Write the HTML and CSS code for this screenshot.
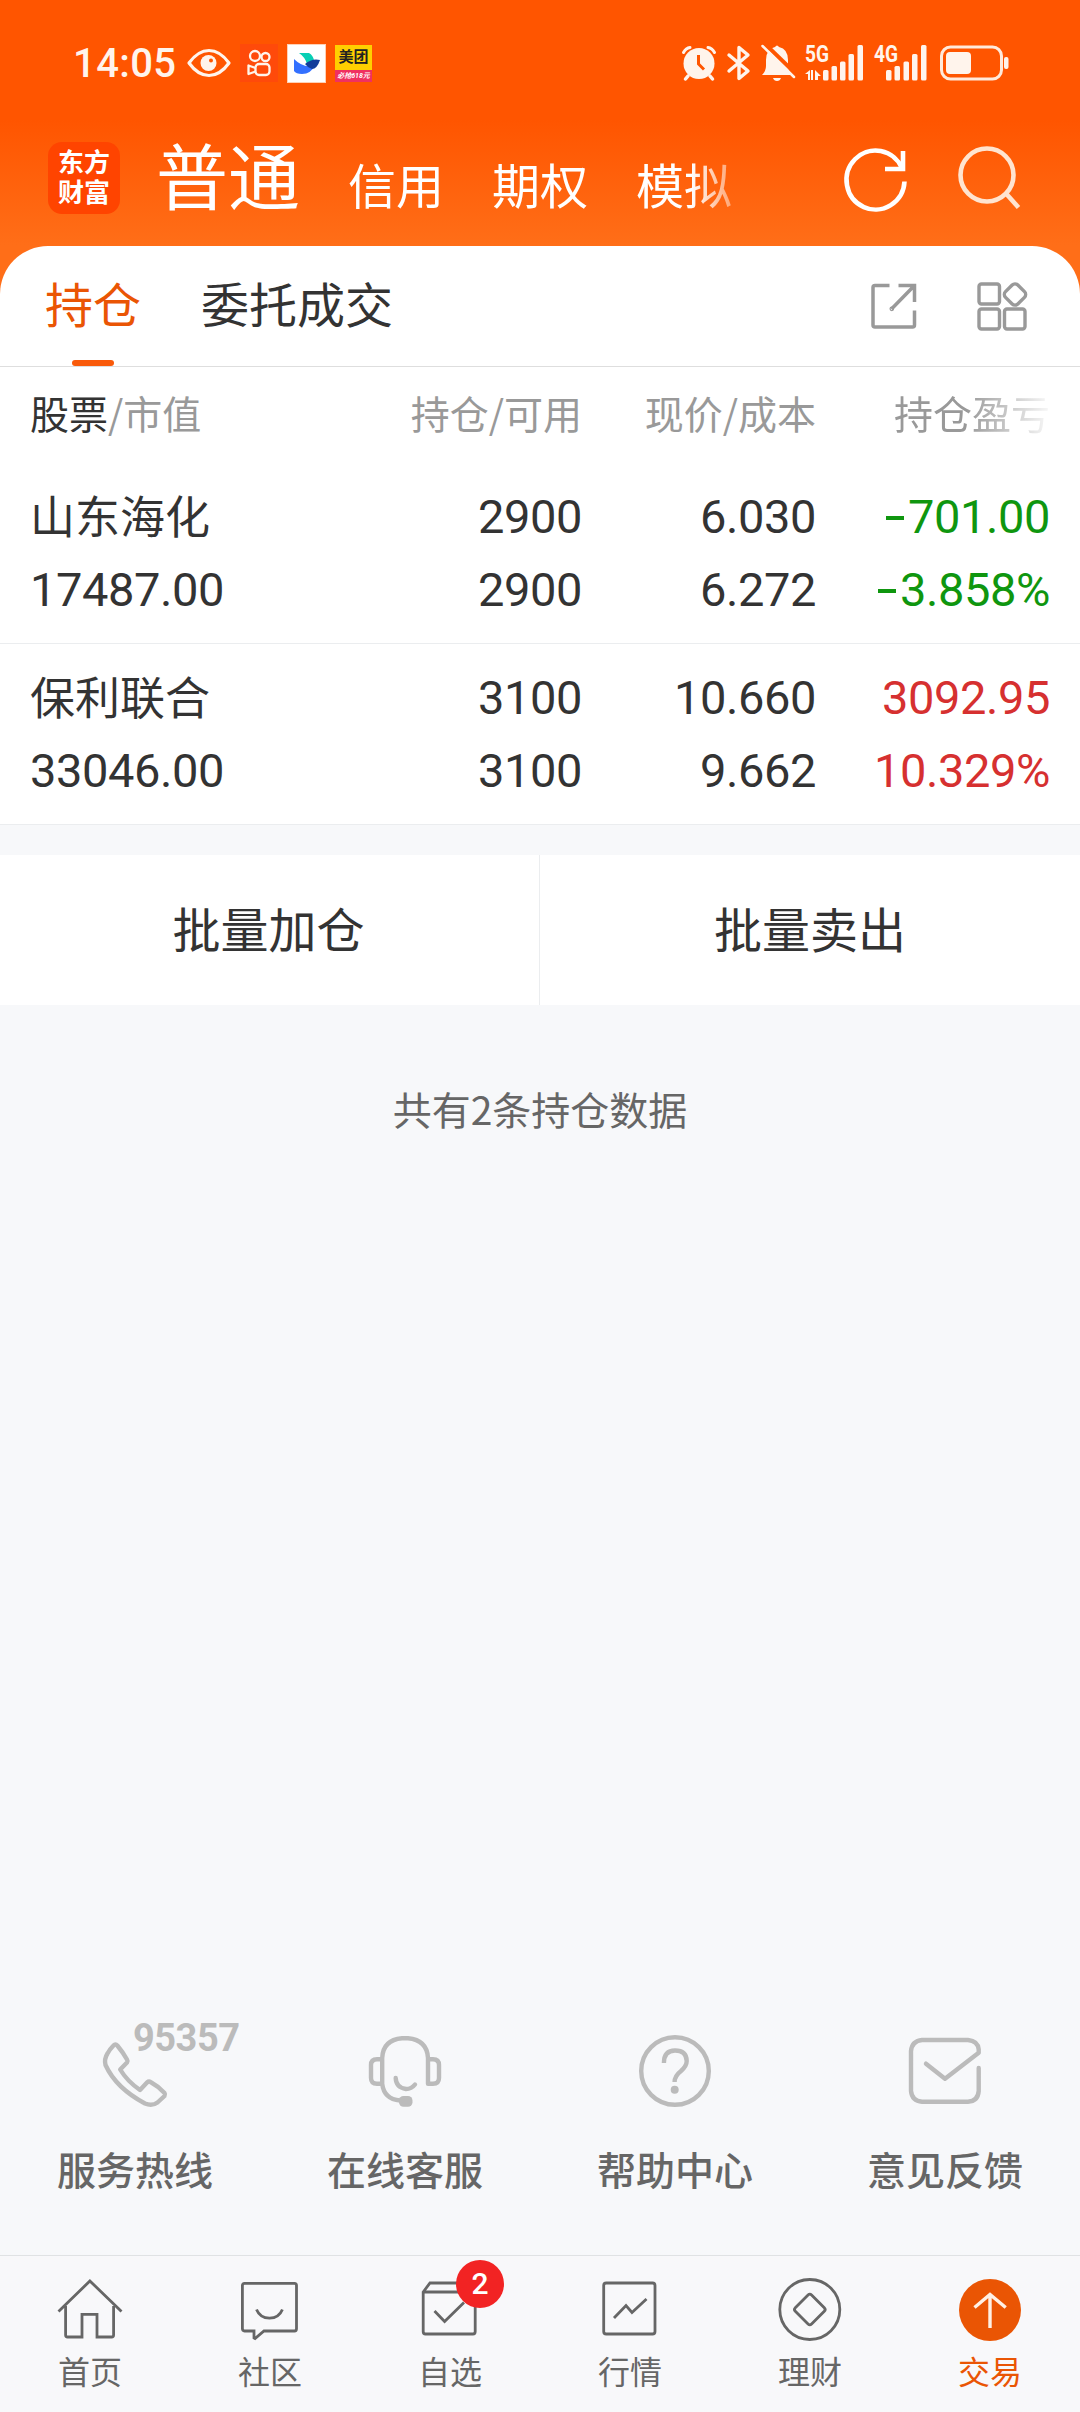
FILE: index.html
```html
<!DOCTYPE html>
<html lang="zh-CN">
<head>
    <meta charset="UTF-8">
    <meta name="viewport" content="width=device-width, initial-scale=1.0">
    <title>持仓</title>
    <link rel="stylesheet" href="styles.css">
</head>
<body>
    <div class="top">
        <div class="status">
            <span class="time">14:05</span>
            <svg class="eye" width="44" height="30" viewBox="0 0 44 30">
                <path d="M2 15Q11 2.500 22 2.500T42 15Q33 27.500 22 27.500T2 15Z" fill="none" stroke="#fff4ec" stroke-width="3.200" stroke-linejoin="round"/>
                <circle cx="21.500" cy="15" r="8" fill="#fff4ec"/>
                <circle cx="24" cy="12.500" r="2" fill="#ff5500"/>
            </svg>
            <svg class="app" width="38" height="38" viewBox="0 0 38 38">
                <rect width="38" height="38" fill="#ff4a0a"/>
                <g fill="none" stroke="#fff4ec" stroke-width="2.300" stroke-linejoin="round">
                    <circle cx="15" cy="12" r="5"/>
                    <circle cx="25.500" cy="13" r="4"/>
                    <rect x="15.500" y="20" width="14" height="11" rx="3.500"/>
                    <path d="M15.500 24L8.500 21.500V30L15.500 27.500"/>
                </g>
            </svg>
            <svg class="app" width="39" height="39" viewBox="0 0 39 39">
                <rect width="39" height="39" fill="#ffd0b5"/>
                <rect x="1" y="1" width="37" height="37" fill="#fff"/>
                <path d="M12 9H22Q26 11 27 16.500L20 20Q18 13 12 9Z" fill="#08cfb4"/>
                <path d="M7 15Q17 25 28 21Q24 30 15 30Q9 30 7 27Z" fill="#3370ff"/>
                <path d="M18 20Q25 14 33 16Q30 25 25 25Q21 24 18 20Z" fill="#133c9a"/>
            </svg>
            <span class="meituan"><b>美团</b><i>必抢618元</i></span>
            <svg class="push" width="36" height="36" viewBox="0 0 36 36">
                <g fill="none" stroke="#fff4ec" stroke-width="4" stroke-linecap="round">
                    <path d="M2.500 7.500Q5 3 9 2.500M33.500 7.500Q31 3 27 2.500" stroke-width="3"/>
                    <path d="M7 31L4.500 34M29 31L31.500 34" stroke-width="3.500"/>
                </g>
                <circle cx="18" cy="18.500" r="15.500" fill="#fff4ec"/>
                <path d="M17.500 10V19L23 24.500" fill="none" stroke="#ff5500" stroke-width="3"/>
            </svg>
            <svg class="bt" width="24" height="36" viewBox="0 0 24 36">
                <path d="M2 10L21 26L12 33.500V2.500L21 10L2 26" fill="none" stroke="#fff4ec" stroke-width="3.400" stroke-linejoin="round" stroke-linecap="round"/>
            </svg>
            <svg class="bell" width="35" height="38" viewBox="0 0 35 38">
                <path d="M1 31Q5 27 5 22V16Q5 5 14 3Q16 0 18 3Q27 5 27 16V22Q27 27 31 31Z" fill="#fff4ec"/>
                <path d="M12 34H20Q19 37 16 37T12 34Z" fill="#fff4ec"/>
                <path d="M3 -1L35 30" stroke="#ff5500" stroke-width="4"/>
                <path d="M1.500 2L33 33" stroke="#fff4ec" stroke-width="2.500" stroke-linecap="round"/>
            </svg>
            <svg class="sig5" width="59" height="36" viewBox="0 0 59 36">
                <text class="net" x="0" y="17" textLength="24" lengthAdjust="spacingAndGlyphs">5G</text>
                <g fill="#fff4ec">
                    <path d="M0 29L5 25V35H3V29ZM6 25H8V35H6ZM10 25L16 31H13V35H10Z"/>
                    <rect x="18" y="25" width="5.500" height="10.500" rx="1.500"/>
                    <rect x="26.500" y="21" width="5.500" height="14.500" rx="1.500"/>
                    <rect x="35" y="16.500" width="5.500" height="19" rx="1.500"/>
                    <rect x="43.500" y="9" width="5.500" height="26.500" rx="1.500"/>
                    <rect x="52.500" y="0" width="5.500" height="35.500" rx="1.500"/>
                </g>
            </svg>
            <svg class="sig4" width="53" height="36" viewBox="0 0 53 36">
                <text class="net" x="0" y="17" textLength="24" lengthAdjust="spacingAndGlyphs">4G</text>
                <g fill="#fff4ec">
                    <rect x="12" y="25" width="5.500" height="10.500" rx="1.500"/>
                    <rect x="20.500" y="21" width="5.500" height="14.500" rx="1.500"/>
                    <rect x="29.500" y="16.500" width="5.500" height="19" rx="1.500"/>
                    <rect x="38" y="9" width="5.500" height="26.500" rx="1.500"/>
                    <rect x="47" y="0" width="5.500" height="35.500" rx="1.500"/>
                </g>
            </svg>
            <svg class="battery" width="70" height="36" viewBox="0 0 70 36">
                <rect x="1.500" y="2" width="60" height="32" rx="9" fill="none" stroke="#ffeadb" stroke-width="3"/>
                <rect x="6" y="7" width="25" height="22" rx="4" fill="#fff4ec"/>
                <rect x="64" y="12" width="4.500" height="12" rx="2" fill="#fff4ec"/>
            </svg>
        </div>
        <div class="header">
            <div class="logo"><span>东方</span><span>财富</span></div>
            <div class="accounts">
                <span class="big">普通</span>
                <span>信用</span>
                <span>期权</span>
                <span>模拟</span>
            </div>
            <svg class="refresh" width="66" height="66" viewBox="0 0 66 66" fill="none" stroke="#fff" stroke-width="4.600">
                <path d="M60.500 35.500A29 29.500 0 1 1 58 22"/>
                <path d="M59 5V23H41"/>
            </svg>
            <svg class="search" width="66" height="66" viewBox="0 0 66 66" fill="none" stroke="#ffe4d0" stroke-width="4.600">
                <circle cx="32" cy="30" r="26.500"/>
                <path d="M51 48.500L63.500 62.500"/>
            </svg>
        </div>
    </div>

    <div class="card">
        <div class="tabs">
            <span class="tab active">持仓</span>
            <span class="tab">委托成交</span>
            <svg class="export" width="48" height="48" viewBox="0 0 48 48" fill="none" stroke="#999" stroke-width="3.500">
                <path d="M19.500 3.500H5Q3 3.500 3 5.500V43Q3 45 5 45H42.500Q44.500 45 44.500 43V28.500"/>
                <path d="M28.500 3.500H44.500V20M44 4L21.500 27"/>
                <circle cx="21.800" cy="26.800" r=".6"/>
            </svg>
            <svg class="grid" width="52" height="50" viewBox="0 0 52 50" fill="none" stroke="#999" stroke-width="3.400">
                <rect x="3" y="3" width="20.500" height="20" rx="2.500"/>
                <rect x="3" y="28" width="20.500" height="20" rx="2.500"/>
                <rect x="28.500" y="28" width="20.500" height="20" rx="2.500"/>
                <rect x="30.300" y="4.800" width="17.400" height="17.400" rx="4" transform="rotate(45 39 13.500)"/>
            </svg>
        </div>

        <div class="thead">
            <span><em>股票</em>/市值</span>
            <span>持仓/可用</span>
            <span>现价/成本</span>
            <span class="fade">持仓盈亏</span>
        </div>
        <div class="stock">
            <span class="name">山东海化</span>
            <span>2900</span>
            <span>6.030</span>
            <span class="down"><u></u>701.00</span>
            <span>17487.00</span>
            <span>2900</span>
            <span>6.272</span>
            <span class="down"><u></u>3.858%</span>
        </div>
        <div class="stock">
            <span class="name">保利联合</span>
            <span>3100</span>
            <span>10.660</span>
            <span class="up">3092.95</span>
            <span>33046.00</span>
            <span>3100</span>
            <span>9.662</span>
            <span class="up">10.329%</span>
        </div>
    </div>

    <div class="batch">
        <div>批量加仓</div>
        <div>批量卖出</div>
    </div>
    <p class="total">共有2条持仓数据</p>

    <div class="services">
        <div class="service">
            <span class="phone">
                <svg width="72" height="72" viewBox="0 0 72 72">
                    <path d="M14.500 10.500Q16.400 8.500 18.300 10.500Q24.500 18 28 24.500Q29 26 28 27.500L21.200 34.500Q28 46 41 55L48 47.500Q49.800 46 51.500 47Q59 51 65.500 58Q66.500 59.500 65.500 61L58.500 67.500Q53 71.500 46 68.500Q17 53 6.500 30Q5 24 8.500 18.500Q11 14 14.500 10.500Z"/>
                </svg>
                <b>95357</b>
            </span>
            <span>服务热线</span>
        </div>
        <div class="service">
            <svg width="72" height="72" viewBox="0 0 72 72">
                <path d="M13.200 48.500V23Q14 5 33 3.300H39Q58 5 59 23V48.700H64Q70 48.700 70 43V30Q70 24.200 64 24.200H59M13.200 24.200H8Q2 24.200 2 30V43Q2 48.700 8 48.700H13.200Q15 64 31 65.500"/>
                <path d="M26.700 43Q27 52.500 37 54Q42.500 54 46 49.500"/>
                <rect x="30" y="61" width="13.500" height="10.700" rx="4.500" class="fill"/>
            </svg>
            <span>在线客服</span>
        </div>
        <div class="service">
            <svg width="72" height="72" viewBox="0 0 72 72">
                <circle cx="36" cy="36" r="33.800"/>
                <path class="butt" d="M24.900 28Q25 15.500 36 15.500Q47.500 15.500 47.700 26Q47.700 31 42 36Q35.600 41 35.600 47"/>
                <circle cx="35.700" cy="54.700" r="4" class="fill"/>
            </svg>
            <span>帮助中心</span>
        </div>
        <div class="service">
            <svg width="72" height="72" viewBox="0 0 72 72">
                <path d="M69.700 33V56Q69 66 59 66.700H13Q3 66 2 56V16Q3 6 13 5H59Q69 6 69.700 14.500V17.700L36 43.700L17 28.700"/>
            </svg>
            <span>意见反馈</span>
        </div>
    </div>

    <div class="nav">
        <div class="item">
            <svg width="64" height="64" viewBox="0 0 64 64">
                <path d="M.5 33.500L31.900 3L63.500 33.500M7.600 28V57Q7.600 59 9.500 59H24V36.300H39V59H53.600Q55.600 59 55.600 57V28"/>
            </svg>
            <span>首页</span>
        </div>
        <div class="item">
            <svg width="64" height="64" viewBox="0 0 64 64">
                <path d="M6.500 5.300H56.500Q58.500 5.300 58.500 7.500V50.500Q58.500 53 56.500 53H26L17 60.500L16 60V53H6.500Q4.400 53 4.400 50.500V7.500Q4.400 5.300 6.500 5.300Z"/>
                <path d="M18.500 31.500Q22 40 31.500 40.200Q41 40 44.400 31.500"/>
            </svg>
            <span>社区</span>
        </div>
        <div class="item">
            <svg width="64" height="64" viewBox="0 0 64 64">
                <path d="M5.200 14L12 5H50.500L57.200 14V53.500Q57.200 56 55 56H7.500Q5.200 56 5.200 53.500ZM5.200 14H57.200M16.500 33L26.600 43.500L46 24.500"/>
            </svg>
            <span>自选</span>
            <b class="badge">2</b>
        </div>
        <div class="item">
            <svg width="64" height="64" viewBox="0 0 64 64">
                <rect x="5.700" y="5" width="51.300" height="51" rx="2.500"/>
                <path d="M16 40L28 27.500L34 34.500L48.500 21"/>
            </svg>
            <span>行情</span>
        </div>
        <div class="item">
            <svg width="64" height="64" viewBox="0 0 64 64">
                <circle cx="31.800" cy="31.500" r="30"/>
                <rect x="20.300" y="20" width="23" height="23" rx="2.500" transform="rotate(45 31.800 31.500)"/>
            </svg>
            <span>理财</span>
        </div>
        <div class="item current">
            <svg width="64" height="64" viewBox="0 0 64 64">
                <circle class="disc" cx="32" cy="32" r="31"/>
                <path class="arrow" d="M32 50V17M16.500 29.500L32 16.500L47.700 29.500"/>
            </svg>
            <span>交易</span>
        </div>
    </div>
</body>
</html>
```
FILE: styles.css
```css
* {
    box-sizing: border-box;
}
body {
    margin: 0;
    width: 1080px;
    height: 2412px;
    display: flex;
    flex-direction: column;
    background-color: #f7f8fa;
    font-family: Roboto, "Noto Sans CJK SC", sans-serif;
    color: #333;
    overflow: hidden;
}
svg {
    display: block;
    flex: none;
    overflow: visible;
}

/* status bar and account header */
.top {
    height: 306px;
    flex: none;
    background: linear-gradient(#ff5500 120px, #ff6e18 245px);
}
.status {
    height: 126px;
    padding: 0 70px 0 73px;
    display: flex;
    align-items: center;
}
.time {
    width: 114px;
    font-size: 40px;
    font-weight: 500;
    letter-spacing: 0.4px;
    color: #fff4ec;
}
.eye {
    margin-right: 9px;
}
.app {
    margin-right: 9px;
}
.meituan {
    width: 37px;
    height: 37px;
    display: flex;
    flex-direction: column;
    background-color: #ffd000;
    text-align: center;
    white-space: nowrap;
}
.meituan b {
    height: 25px;
    font-size: 15px;
    line-height: 24px;
    color: #222;
}
.meituan i {
    height: 12px;
    font-size: 7px;
    font-weight: bold;
    line-height: 12px;
    color: #fff;
    background-color: #f03060;
}
.push {
    margin-left: auto;
    margin-right: 10px;
}
.bt {
    margin-right: 10px;
}
.bell {
    margin-right: 9px;
}
.sig5 {
    margin-right: 10px;
}
.sig4 {
    margin-right: 13px;
}
.net {
    font-size: 23px;
    font-weight: bold;
    fill: #fff4ec;
}
.header {
    height: 120px;
    padding: 0 56px 0 48px;
    display: flex;
    align-items: flex-start;
    color: #fff;
}
.logo {
    width: 72px;
    height: 72px;
    margin-top: 16px;
    padding-top: 4px;
    display: flex;
    flex-direction: column;
    border-radius: 14px;
    background-color: #ff4400;
    font-family: "Noto Sans CJK SC", sans-serif;
    font-size: 26px;
    font-weight: bold;
    line-height: 30px;
    text-align: center;
}
.accounts {
    width: 641px;
    margin-left: 36px;
    padding-top: 4px;
    display: flex;
    align-items: baseline;
    gap: 48px;
    font-size: 48px;
    line-height: 100px;
    -webkit-mask-image: linear-gradient(90deg, #000 535px, transparent 605px);
    mask-image: linear-gradient(90deg, #000 535px, transparent 605px);
}
.accounts .big {
    font-size: 72px;
}
.refresh {
    margin-top: 20px;
    margin-left: 47px;
}
.search {
    margin-top: 19px;
    margin-left: 45px;
}

/* positions card */
.card {
    margin-top: -60px;
    flex: none;
    background-color: #fff;
    border-radius: 48px 48px 0 0;
}
.tabs {
    height: 121px;
    padding: 0 52px 0 45px;
    display: flex;
    align-items: center;
    border-bottom: 1px solid #dedede;
}
.tab {
    height: 120px;
    margin-right: 60px;
    padding-top: 2px;
    font-size: 48px;
    line-height: 118px;
}
.tab.active {
    display: flex;
    flex-direction: column;
    align-items: center;
    color: #ea5504;
}
.tab.active::after {
    content: "";
    width: 42px;
    height: 6px;
    flex: none;
    margin-top: -6px;
    border-radius: 3px;
    background-color: #f95a0a;
}
.export {
    margin-left: auto;
    margin-right: 58px;
}
.thead,
.stock {
    padding: 0 30px;
    display: grid;
    grid-template-columns: 1fr 250px 234px 234px;
    text-align: right;
}
.thead span:first-child,
.stock span:nth-child(4n + 1) {
    text-align: left;
}
.thead {
    height: 96px;
    font-family: "Noto Sans CJK SC", sans-serif;
    font-size: 39px;
    line-height: 91px;
    color: #999;
}
.thead em {
    font-style: normal;
    color: #333;
}
.fade {
    -webkit-mask-image: linear-gradient(90deg, #000 150px, transparent 240px);
    mask-image: linear-gradient(90deg, #000 150px, transparent 240px);
}
.stock {
    height: 181px;
    padding-top: 17px;
    border-bottom: 1px solid #ebedef;
    font-size: 47px;
    line-height: 74px;
    letter-spacing: -0.4px;
    grid-template-rows: 73px 73px;
}
.stock .name {
    font-size: 45px;
    line-height: 77px;
    letter-spacing: 0;
}
.down {
    color: #0f960f;
}
.down u {
    display: inline-block;
    width: 18px;
    height: 4px;
    margin-right: 4px;
    vertical-align: 13px;
    background-color: #0f960f;
}
.up {
    color: #d63030;
}

.batch {
    height: 150px;
    margin-top: 30px;
    flex: none;
    display: flex;
    background-color: #fff;
    font-size: 48px;
    line-height: 153px;
    text-align: center;
}
.batch div {
    width: 541px;
}
.batch div:first-child {
    width: 539px;
    padding-right: 2px;
}
.batch div + div {
    border-left: 1px solid #ebedef;
}
.total {
    margin: 73px 0 0;
    font-family: "Noto Sans CJK SC", sans-serif;
    font-size: 39px;
    line-height: 60px;
    text-align: center;
    color: #666;
}

/* service links */
.services {
    margin-top: auto;
    padding-bottom: 53px;
    display: flex;
}
.service {
    flex: 1;
    display: flex;
    flex-direction: column;
    align-items: center;
    gap: 35px;
    font-size: 39px;
    font-weight: 500;
    line-height: 60px;
    color: #666;
}
.service svg {
    fill: none;
    stroke: #bbb;
    stroke-width: 4.400;
    stroke-linecap: round;
    stroke-linejoin: round;
}
.service .butt {
    stroke-linecap: butt;
}
.service .fill {
    fill: #bbb;
    stroke: none;
}
.phone {
    position: relative;
}
.phone b {
    position: absolute;
    left: 34px;
    top: -17px;
    font-size: 38px;
    line-height: 40px;
    letter-spacing: -0.5px;
    color: #bbb;
}

/* bottom navigation */
.nav {
    height: 157px;
    flex: none;
    padding-top: 22px;
    display: flex;
    border-top: 1px solid #e0e2e4;
    background-color: #f8f8fa;
}
.item {
    position: relative;
    flex: 1;
    display: flex;
    flex-direction: column;
    align-items: center;
    gap: 9px;
    font-size: 32px;
    line-height: 44px;
    color: #666;
}
.item svg {
    fill: none;
    stroke: #666;
    stroke-width: 2.800;
}
.badge {
    position: absolute;
    left: 96px;
    top: -18px;
    width: 48px;
    height: 48px;
    border-radius: 50%;
    background-color: #f22323;
    font-size: 30px;
    font-weight: 500;
    line-height: 48px;
    text-align: center;
    color: #fff;
}
.current {
    color: #ea5504;
}
.item .disc {
    fill: #ea5504;
    stroke: none;
}
.item .arrow {
    stroke: #fff0e4;
    stroke-width: 3.400;
}
```
